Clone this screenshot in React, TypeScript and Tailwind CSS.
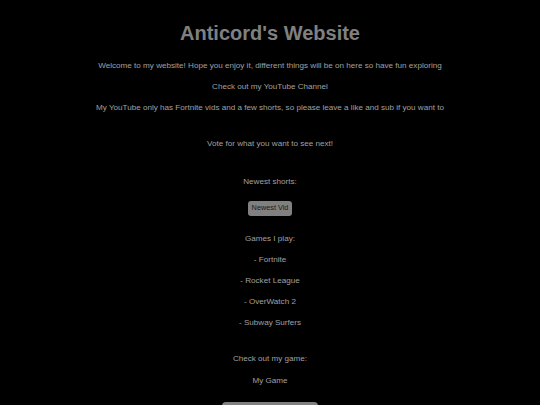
export default function App() {
  const line = 'h-[21px] leading-[21px] text-[8.1px] text-[#a0a0a0]';
  return (
    <div
      className="min-h-[405px] bg-black flex flex-col items-center overflow-hidden antialiased"
      style={{ fontFamily: '"Liberation Sans", Arial, sans-serif' }}
    >
      <h1 className="mt-[21px] text-[20px] leading-[24px] font-bold text-[#808080]">
        Anticord's Website
      </h1>
      <div className="mt-[9.5px] flex flex-col items-center">
        <p className={line}>
          Welcome to my website! Hope you enjoy it, different things will be on here so have fun exploring
        </p>
        <p className={line}>Check out my YouTube Channel</p>
        <p className={line}>
          My YouTube only has Fortnite vids and a few shorts, so please leave a like and sub if you want to
        </p>
      </div>
      <p className={`${line} mt-[15px]`}>Vote for what you want to see next!</p>
      <p className={`${line} mt-[17px]`}>Newest shorts:</p>
      <button className="mt-[9.5px] h-[15px] px-[4px] rounded-[3px] bg-[#808080] text-[7.3px] text-[#1a1a1a]">
        Newest Vid
      </button>
      <div className="mt-[11.5px] flex flex-col items-center">
        <p className={line}>Games I play:</p>
        <p className={line}>- Fortnite</p>
        <p className={line}>- Rocket League</p>
        <p className={line}>- OverWatch 2</p>
        <p className={line}>- Subway Surfers</p>
      </div>
      <p className={`${line} mt-[15px]`}>Check out my game:</p>
      <p className={`${line} mt-[1px]`}>My Game</p>
      <div className="mt-[11.5px] w-[96px] h-[20px] rounded-t-[4px] bg-[#808080]" />
    </div>
  );
}
